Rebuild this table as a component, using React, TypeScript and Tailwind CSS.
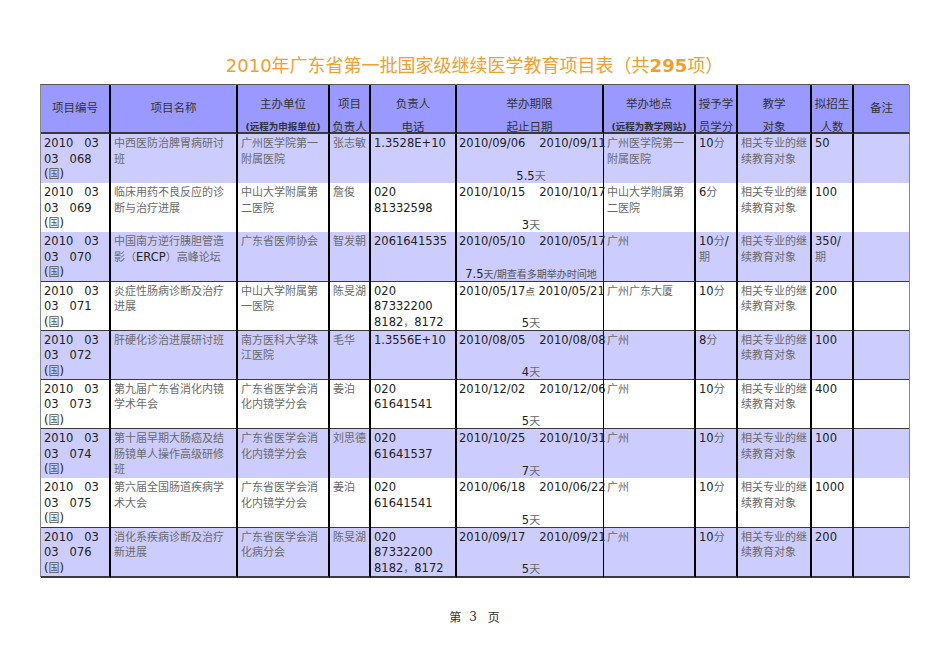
import React from "react";

type Row = {
  no: string;
  name: string[];
  org: string[];
  person: string;
  phone: string[];
  d1: string;
  mid?: React.ReactNode;
  d2: string;
  days: React.ReactNode;
  place: string[];
  credit: string[];
  count: string[];
};

const rows: Row[] = [
  { no: "068", name: ["中西医防治脾胃病研讨", "班"], org: ["广州医学院第一", "附属医院"], person: "张志敏", phone: ["1.3528E+10"], d1: "2010/09/06", d2: "2010/09/11", days: "5.5天", place: ["广州医学院第一", "附属医院"], credit: ["10分"], count: ["50"] },
  { no: "069", name: ["临床用药不良反应的诊", "断与治疗进展"], org: ["中山大学附属第", "二医院"], person: "詹俊", phone: ["020", "81332598"], d1: "2010/10/15", d2: "2010/10/17", days: "3天", place: ["中山大学附属第", "二医院"], credit: ["6分"], count: ["100"] },
  { no: "070", name: ["中国南方逆行胰胆管造", "影（ERCP）高峰论坛"], org: ["广东省医师协会"], person: "智发朝", phone: ["2061641535"], d1: "2010/05/10", d2: "2010/05/17", days: "7.5|天/期查看多期举办时间地", place: ["广州"], credit: ["10分/", "期"], count: ["350/", "期"] },
  { no: "071", name: ["炎症性肠病诊断及治疗", "进展"], org: ["中山大学附属第", "一医院"], person: "陈旻湖", phone: ["020", "87332200", "8182，8172"], d1: "2010/05/17", mid: "点", d2: "2010/05/21", days: "5天", place: ["广州广东大厦"], credit: ["10分"], count: ["200"] },
  { no: "072", name: ["肝硬化诊治进展研讨班"], org: ["南方医科大学珠", "江医院"], person: "毛华", phone: ["1.3556E+10"], d1: "2010/08/05", d2: "2010/08/08", days: "4天", place: ["广州"], credit: ["8分"], count: ["100"] },
  { no: "073", name: ["第九届广东省消化内镜", "学术年会"], org: ["广东省医学会消", "化内镜学分会"], person: "姜泊", phone: ["020", "61641541"], d1: "2010/12/02", d2: "2010/12/06", days: "5天", place: ["广州"], credit: ["10分"], count: ["400"] },
  { no: "074", name: ["第十届早期大肠癌及结", "肠镜单人操作高级研修", "班"], org: ["广东省医学会消", "化内镜学分会"], person: "刘思德", phone: ["020", "61641537"], d1: "2010/10/25", d2: "2010/10/31", days: "7天", place: ["广州"], credit: ["10分"], count: ["100"] },
  { no: "075", name: ["第六届全国肠道疾病学", "术大会"], org: ["广东省医学会消", "化内镜学分会"], person: "姜泊", phone: ["020", "61641541"], d1: "2010/06/18", d2: "2010/06/22", days: "5天", place: ["广州"], credit: ["10分"], count: ["1000"] },
  { no: "076", name: ["消化系疾病诊断及治疗", "新进展"], org: ["广东省医学会消", "化病分会"], person: "陈旻湖", phone: ["020", "87332200", "8182，8172"], d1: "2010/09/17", d2: "2010/09/21", days: "5天", place: ["广州"], credit: ["10分"], count: ["200"] },
];

function T({ s }: { s: string }) {
  const parts = s.split(/([\u2E80-\u9FFF\uFF00-\uFFEF\u3000-\u303F]+)/);
  return (
    <>
      {parts.map((p, i) =>
        i % 2 === 1 ? (
          <span key={i} className="text-[#6a6a6a] text-[11px]">
            {p}
          </span>
        ) : (
          <span key={i}>{p}</span>
        )
      )}
    </>
  );
}

function Lines({ lines }: { lines: string[] }) {
  return (
    <>
      {lines.map((l, i) => (
        <div key={i} className="whitespace-nowrap">
          <T s={l} />
        </div>
      ))}
    </>
  );
}

const cell = "border-r-2 border-b-2 border-r-black border-b-[#3a3a3a] px-[3px] pt-[2px] leading-[15.5px] overflow-visible";

function Head({ a, b, small }: { a: string; b?: string; small?: boolean }) {
  if (!b) {
    return (
      <div className="border-r-2 border-b-2 border-r-black border-b-[#3a3a3a] flex items-center justify-center text-[11.5px] text-[#333]">
        {a}
      </div>
    );
  }
  return (
    <div className="border-r-2 border-b-2 border-r-black border-b-[#3a3a3a] flex flex-col items-center pt-[11px] text-[#333] overflow-hidden">
      <div className="leading-[16px] text-[11.5px] whitespace-nowrap">{a}</div>
      <div className={small ? "mt-auto leading-[10px] text-[9.5px] font-bold whitespace-nowrap" : "mt-auto leading-[10px] text-[11.5px] whitespace-nowrap"}>{b}</div>
    </div>
  );
}

export default function App() {
  return (
    <div className="w-[950px] h-[672px] bg-white pl-[40px] pt-[54px] font-['DejaVu_Sans','Noto_Sans_CJK_SC',sans-serif] text-[#222]">
      <div className="w-[869px] text-center text-[18px] leading-[24px] text-[#f0a030] mb-[6px]">
        2010年广东省第一批国家级继续医学教育项目表（共<span className="font-bold">295</span>项）
      </div>
      <div className="w-[869px] grid grid-cols-[70px_127px_92px_41px_86px_147px_92px_42px_74px_42px_56px] grid-rows-[49px] auto-rows-[49.2px] border-t border-l border-t-[#555] border-l-[#888] text-[11.5px]">
        <div className="col-span-11 grid grid-cols-subgrid bg-[#9999ff]">
          <Head a="项目编号" />
          <Head a="项目名称" />
          <Head a="主办单位" b="(远程为申报单位)" small />
          <Head a="项目" b="负责人" />
          <Head a="负责人" b="电话" />
          <Head a="举办期限" b="起止日期" />
          <Head a="举办地点" b="(远程为教学网站)" small />
          <Head a="授予学" b="员学分" />
          <Head a="教学" b="对象" />
          <Head a="拟招生" b="人数" />
          <div className="border-r border-b-2 border-r-[#888] border-b-[#3a3a3a] flex items-center justify-center text-[11.5px] text-[#333]">备注</div>
        </div>
        {rows.map((r, i) => {
          const bg = i % 2 === 0 ? "bg-[#ccccff]" : "bg-white";
          const days = typeof r.days === "string" && r.days.includes("|") ? (
            <>
              <span>{r.days.split("|")[0]}</span>
              <span className="text-[#555] text-[10px]">{r.days.split("|")[1]}</span>
            </>
          ) : (
            <T s={r.days as string} />
          );
          return (
            <div key={r.no} className={"col-span-11 grid grid-cols-subgrid " + bg}>
              <div className={cell}>
                <div className="whitespace-pre">{"2010   03"}</div>
                <div className="whitespace-pre">{"03   " + r.no}</div>
                <div className="whitespace-pre">
                  (<span className="text-[#555] text-[11px]">国</span>)
                </div>
              </div>
              <div className={cell}>
                <Lines lines={r.name} />
              </div>
              <div className={cell}>
                <Lines lines={r.org} />
              </div>
              <div className={cell}>
                <Lines lines={[r.person]} />
              </div>
              <div className={cell}>
                <Lines lines={r.phone} />
              </div>
              <div className="border-r border-b-2 border-r-black border-b-[#3a3a3a] pl-[2px] pt-[2px] flex flex-col overflow-visible">
                <div className="whitespace-pre leading-[15.5px]">
                  {r.d1}
                  {r.mid ? <span className="text-[#555] text-[9.5px]">{r.mid}</span> : null}
                  {r.mid ? " " : "   "}
                  <span className={r.mid ? "" : "ml-[3px]"}>{r.d2}</span>
                </div>
                <div className="mt-auto leading-[12px] text-center whitespace-nowrap">{days}</div>
              </div>
              <div className={cell}>
                <Lines lines={r.place} />
              </div>
              <div className={cell}>
                <Lines lines={r.credit} />
              </div>
              <div className={cell}>
                <Lines lines={["相关专业的继", "续教育对象"]} />
              </div>
              <div className={cell}>
                <Lines lines={r.count} />
              </div>
              <div className="border-r border-b-2 border-r-[#888] border-b-[#3a3a3a]" />
            </div>
          );
        })}
      </div>
      <div className="w-[869px] mt-[32px] flex justify-center items-center text-[12px] leading-[16px] text-[#333] font-['Noto_Sans_CJK_SC',sans-serif]">
        <span>第</span>
        <span className="ml-[8px] font-['DejaVu_Serif',serif]">3</span>
        <span className="ml-[11px]">页</span>
      </div>
    </div>
  );
}
